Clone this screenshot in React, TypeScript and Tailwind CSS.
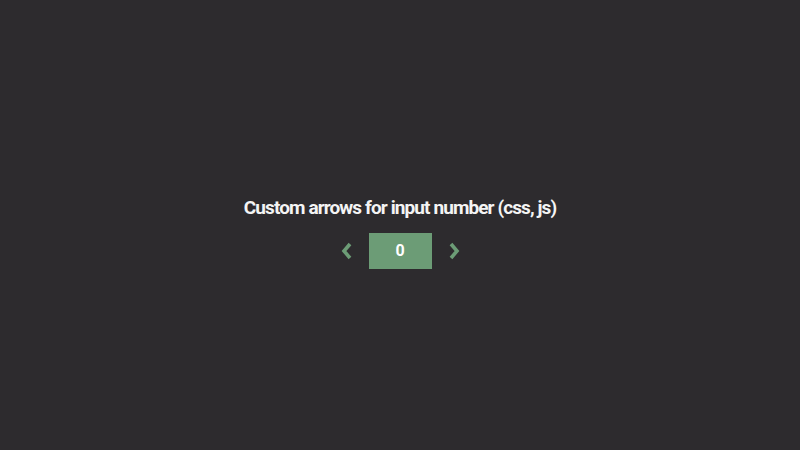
import { useState } from "react";

function Chevron({ dir }: { dir: "left" | "right" }) {
  return (
    <svg width="12" height="18" viewBox="0 0 12 18" className="block">
      <polyline
        points={dir === "left" ? "9,2 3,9 9,16" : "3,2 9,9 3,16"}
        fill="none"
        stroke="#6c9c76"
        strokeWidth="3.6"
        strokeLinecap="butt"
        strokeLinejoin="miter"
      />
    </svg>
  );
}

export default function App() {
  const [value, setValue] = useState(0);

  return (
    <div className="flex h-[450px] w-full flex-col items-center justify-center bg-[#2d2b2e] pt-[15px] font-['Roboto',sans-serif]">
      <h1 className="text-[19px] font-bold leading-6 tracking-[-0.9px] text-[#f4f4f4]">
        Custom arrows for input number (css, js)
      </h1>
      <div className="mt-[13px] flex items-center">
        <button
          className="flex h-9 w-[28px] items-center justify-start"
          onClick={() => setValue((v) => v - 1)}
        >
          <Chevron dir="left" />
        </button>
        <div className="flex h-9 w-[63px] items-center justify-center bg-[#6c9c76] text-[16px] font-bold text-white">
          {value}
        </div>
        <button
          className="flex h-9 w-[28px] items-center justify-end"
          onClick={() => setValue((v) => v + 1)}
        >
          <Chevron dir="right" />
        </button>
      </div>
    </div>
  );
}
